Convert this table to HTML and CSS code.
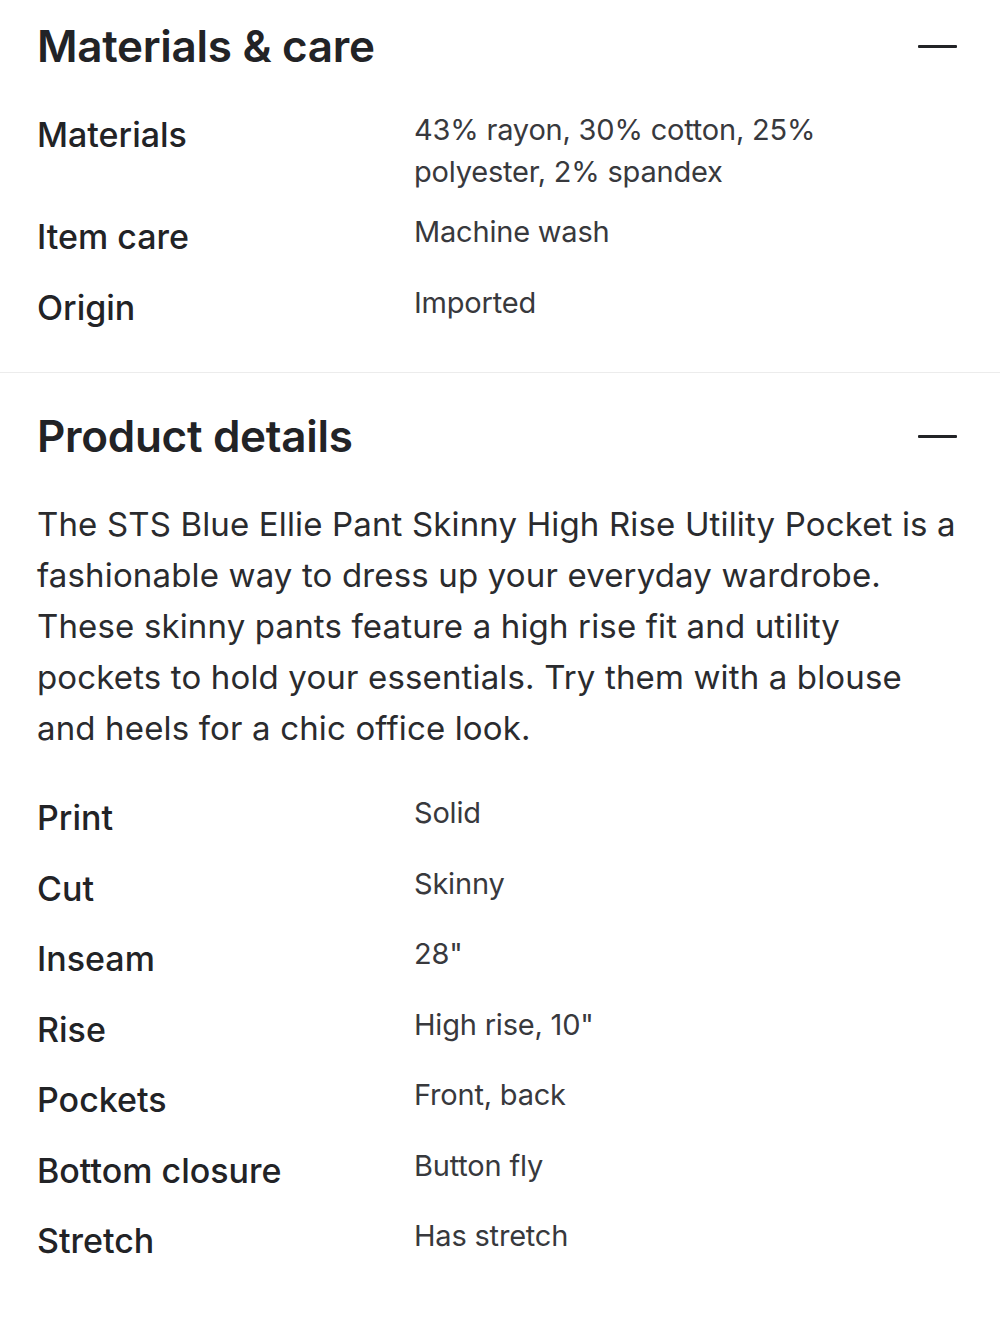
FILE: index.html
```html
<!DOCTYPE html>
<html lang="en">
<head>
    <meta charset="UTF-8">
    <meta name="viewport" content="width=device-width, initial-scale=1.0">
    <title>Product info</title>
    <link rel="stylesheet" href="styles.css">
</head>
<body>
    <section class="panel">
        <div class="panel-head">
            <h2>Materials &amp; care</h2>
            <span class="minus"></span>
        </div>
        <dl class="specs">
            <div class="row">
                <dt>Materials</dt>
                <dd>43% rayon, 30% cotton, 25%<br>polyester, 2% spandex</dd>
            </div>
            <div class="row">
                <dt>Item care</dt>
                <dd>Machine wash</dd>
            </div>
            <div class="row">
                <dt>Origin</dt>
                <dd>Imported</dd>
            </div>
        </dl>
    </section>

    <section class="panel">
        <div class="panel-head">
            <h2>Product details</h2>
            <span class="minus"></span>
        </div>
        <p class="description">
            The STS Blue Ellie Pant Skinny High Rise Utility Pocket is a<br>
            fashionable way to dress up your everyday wardrobe.<br>
            These skinny pants feature a high rise fit and utility<br>
            pockets to hold your essentials. Try them with a blouse<br>
            and heels for a chic office look.
        </p>
        <dl class="specs">
            <div class="row">
                <dt>Print</dt>
                <dd>Solid</dd>
            </div>
            <div class="row">
                <dt>Cut</dt>
                <dd>Skinny</dd>
            </div>
            <div class="row">
                <dt>Inseam</dt>
                <dd>28"</dd>
            </div>
            <div class="row">
                <dt>Rise</dt>
                <dd>High rise, 10"</dd>
            </div>
            <div class="row">
                <dt>Pockets</dt>
                <dd>Front, back</dd>
            </div>
            <div class="row">
                <dt>Bottom closure</dt>
                <dd>Button fly</dd>
            </div>
            <div class="row">
                <dt>Stretch</dt>
                <dd>Has stretch</dd>
            </div>
        </dl>
    </section>
</body>
</html>
```

FILE: styles.css
```css
:root {
    --ink: #222326;
    --soft: #38393d;
    --line: #ececec;
}

* {
    margin: 0;
    padding: 0;
    box-sizing: border-box;
}

body {
    background: #fff;
    color: var(--ink);
    font-family: Inter, "Noto Sans", sans-serif;
}

.panel {
    padding: 18px 43px 38px 37px;
    border-bottom: 1px solid var(--line);
}

.panel + .panel {
    padding-top: 35px;
    border-bottom: none;
}

.panel-head {
    display: flex;
    align-items: center;
    justify-content: space-between;
    height: 56px;
}

h2 {
    font-size: 44px;
    font-weight: 600;
    letter-spacing: -0.3px;
}

.minus {
    width: 39px;
    height: 3px;
    background: var(--ink);
    border-radius: 1px;
}

.specs {
    margin-top: 35px;
    display: flex;
    flex-direction: column;
    gap: 18px;
}

.row {
    display: grid;
    grid-template-columns: 377px 1fr;
    align-items: start;
}

dt {
    font-size: 34px;
    line-height: 52.5px;
    font-weight: 500;
}

dd {
    font-size: 29px;
    line-height: 42px;
    letter-spacing: -0.2px;
    color: var(--soft);
}

.description {
    margin-top: 35px;
    font-size: 33px;
    line-height: 51px;
    letter-spacing: 0.15px;
    color: #2a2b2e;
    white-space: nowrap;
}

.description + .specs {
    margin-top: 38px;
}
```
